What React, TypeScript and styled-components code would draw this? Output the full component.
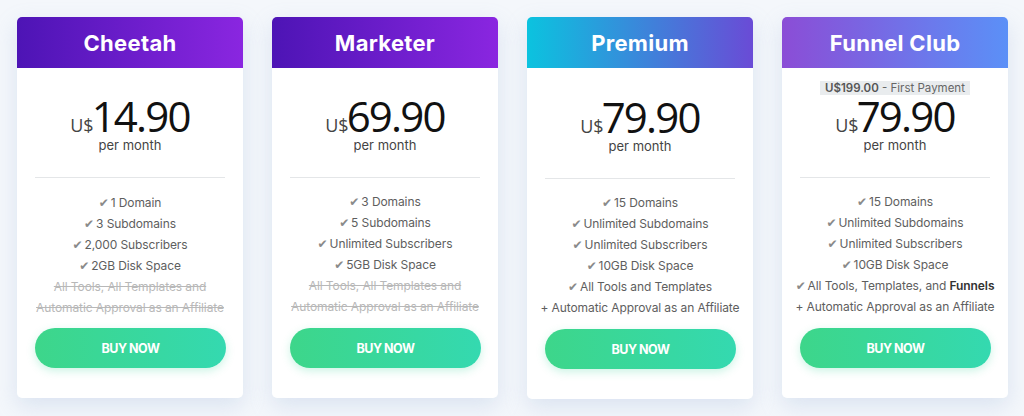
import React from "react";
import styled, { createGlobalStyle } from "styled-components";

const Global = createGlobalStyle`
  html, body { margin: 0; padding: 0; }
  body {
    width: 1024px;
    height: 416px;
    overflow: hidden;
    background: #f4f7fb;
    font-family: Inter, "Open Sans", sans-serif;
  }
`;

const Page = styled.div`
  display: grid;
  grid-template-columns: repeat(4, 226px);
  column-gap: 29px;
  padding: 17px 0 0 17px;
`;

const Card = styled.div<{ $shift: number }>`
  display: flex;
  flex-direction: column;
  background: #ffffff;
  border-radius: 5px;
  box-shadow: 0 8px 22px rgba(150, 175, 215, 0.28);
  height: ${(p) => 381 + p.$shift}px;
`;

const Header = styled.div<{ $from: string; $to: string }>`
  height: 51px;
  flex: none;
  border-radius: 5px 5px 0 0;
  background: linear-gradient(90deg, ${(p) => p.$from}, ${(p) => p.$to});
  display: flex;
  align-items: center;
  justify-content: center;
  color: #fff;
  font-family: Inter, sans-serif;
  font-weight: 700;
  font-size: 22px;
  letter-spacing: 0.3px;
`;

const PriceBlock = styled.div<{ $shift: number }>`
  height: ${(p) => 109 + p.$shift}px;
  flex: none;
  display: flex;
  flex-direction: column;
  align-items: center;
  justify-content: flex-end;
  padding-bottom: 24px;
  box-sizing: border-box;
`;

const Badge = styled.div`
  background: #e9ecee;
  color: #666;
  font-family: Inter, sans-serif;
  font-size: 11.5px;
  padding: 0 5px;
  line-height: 14px;
  b { font-weight: 600; color: #555; }
`;

const PriceLine = styled.div`
  display: flex;
  align-items: baseline;
  height: 42px;
  line-height: 42px;
`;

const Currency = styled.span`
  font-family: "Open Sans", sans-serif;
  font-size: 18px;
  color: #444;
  margin-right: -2px;
`;

const Amount = styled.span`
  font-family: "Open Sans", sans-serif;
  font-size: 42px;
  font-weight: 400;
  color: #111;
  letter-spacing: -1.8px;
`;

const Period = styled.div`
  font-family: Inter, sans-serif;
  font-size: 13px;
  color: #444;
  line-height: 16px;
  height: 16px;
`;

const Divider = styled.hr`
  flex: none;
  border: none;
  border-top: 1.5px solid #e4e6e8;
  margin: 0 18px;
`;

const Features = styled.ul<{ $shift: number }>`
  list-style: none;
  margin: 0;
  padding: ${(p) => 14 + p.$shift}px 0 0;
  display: flex;
  flex-direction: column;
  align-items: center;
  font-family: Inter, sans-serif;
  font-size: 12px;
  color: #555;
`;

const Feature = styled.li<{ $off?: boolean }>`
  white-space: nowrap;
  height: 21px;
  line-height: 21px;
  letter-spacing: -0.1px;
  color: ${(p) => (p.$off ? "#b8b8b8" : "#5e5e5e")};
  text-decoration: ${(p) => (p.$off ? "line-through" : "none")};
  b { font-weight: 600; color: #333; }
`;

const Check = styled.span`
  font-family: "DejaVu Sans", sans-serif;
  color: #8a8a8a;
  font-size: 12px;
  line-height: 1;
  margin-right: 2px;
`;

const Button = styled.button`
  flex: none;
  margin: 0 17px 0 18px;
  height: 40px;
  border: none;
  border-radius: 20px;
  background: linear-gradient(90deg, #3dd68a, #34d9b0);
  color: #fff;
  font-family: Inter, sans-serif;
  font-weight: 700;
  font-size: 12.5px;
  letter-spacing: -0.5px;
  box-shadow: 0 3px 8px rgba(52, 210, 150, 0.25);
  cursor: pointer;
`;

const Spacer = styled.div<{ $h: number }>`
  flex: none;
  height: ${(p) => p.$h}px;
`;

type Item = { text: React.ReactNode; check?: boolean; off?: boolean };

type Plan = {
  name: string;
  from: string;
  to: string;
  price: string;
  badge?: boolean;
  shift: number;
  listShift: number;
  items: Item[];
};

const plans: Plan[] = [
  {
    name: "Cheetah",
    from: "#4d14b5",
    to: "#8a26e0",
    price: "14.90",
    shift: 0,
    listShift: 0,
    items: [
      { text: "1 Domain", check: true },
      { text: "3 Subdomains", check: true },
      { text: "2,000 Subscribers", check: true },
      { text: "2GB Disk Space", check: true },
      { text: "All Tools, All Templates and", off: true },
      { text: "Automatic Approval as an Affiliate", off: true },
    ],
  },
  {
    name: "Marketer",
    from: "#4d14b5",
    to: "#8a26e0",
    price: "69.90",
    shift: 0,
    listShift: -1,
    items: [
      { text: "3 Domains", check: true },
      { text: "5 Subdomains", check: true },
      { text: "Unlimited Subscribers", check: true },
      { text: "5GB Disk Space", check: true },
      { text: "All Tools, All Templates and", off: true },
      { text: "Automatic Approval as an Affiliate", off: true },
    ],
  },
  {
    name: "Premium",
    from: "#0bc3df",
    to: "#6a4bd6",
    price: "79.90",
    shift: 1,
    listShift: -1,
    items: [
      { text: "15 Domains", check: true },
      { text: "Unlimited Subdomains", check: true },
      { text: "Unlimited Subscribers", check: true },
      { text: "10GB Disk Space", check: true },
      { text: "All Tools and Templates", check: true },
      { text: "+ Automatic Approval as an Affiliate" },
    ],
  },
  {
    name: "Funnel Club",
    from: "#8b4dd6",
    to: "#5b90f7",
    price: "79.90",
    badge: true,
    shift: 0,
    listShift: -1,
    items: [
      { text: "15 Domains", check: true },
      { text: "Unlimited Subdomains", check: true },
      { text: "Unlimited Subscribers", check: true },
      { text: "10GB Disk Space", check: true },
      {
        text: (
          <>
            All Tools, Templates, and <b>Funnels</b>
          </>
        ),
        check: true,
      },
      { text: "+ Automatic Approval as an Affiliate" },
    ],
  },
];

export default function App() {
  return (
    <>
      <Global />
      <Page>
        {plans.map((p) => (
          <Card key={p.name} $shift={p.shift}>
            <Header $from={p.from} $to={p.to}>
              {p.name}
            </Header>
            <PriceBlock $shift={p.shift}>
              {p.badge && (
                <Badge>
                  <b>U$199.00</b> - First Payment
                </Badge>
              )}
              <PriceLine>
                <Currency>U$</Currency>
                <Amount>{p.price}</Amount>
              </PriceLine>
              <Period>per month</Period>
            </PriceBlock>
            <Divider />
            <Features $shift={p.listShift}>
              {p.items.map((it, i) => (
                <Feature key={i} $off={it.off}>
                  {it.check && <Check>✔</Check>}
                  {it.text}
                </Feature>
              ))}
            </Features>
            <Spacer $h={10 - p.listShift} />
            <Button>BUY NOW</Button>
          </Card>
        ))}
      </Page>
    </>
  );
}
